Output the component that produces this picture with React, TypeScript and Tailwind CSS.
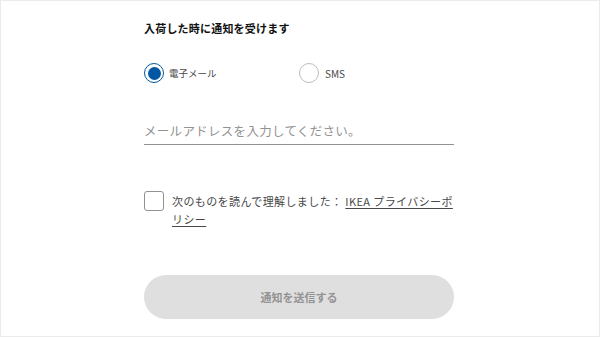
import React from "react";

export default function App() {
  const font = { fontFamily: '"Noto Sans CJK JP", "Noto Sans", sans-serif' };
  return (
    <div
      className="w-[600px] h-[337px] box-border border border-[#ebebeb] bg-white overflow-hidden"
      style={font}
    >
      <div className="ml-[143px] w-[310px] flex flex-col pt-[19px]">
        <div className="text-[11px] leading-[16px] font-bold text-[#111111] tracking-[0.2px]">
          入荷した時に通知を受けます
        </div>

        <div className="mt-[27px] flex items-center h-[20px]">
          <div className="flex items-center w-[155px]">
            <div className="w-[20px] h-[20px] rounded-full border-[1.5px] border-[#0058a3] flex items-center justify-center">
              <div className="w-[13px] h-[13px] rounded-full bg-[#0058a3]" />
            </div>
            <span className="ml-[5px] text-[9.5px] text-[#484848]">電子メール</span>
          </div>
          <div className="flex items-center">
            <div className="w-[20px] h-[20px] rounded-full border border-[#bdbdbd]" />
            <span className="ml-[6px] text-[10px] text-[#484848]">SMS</span>
          </div>
        </div>

        <div className="mt-[39px] border-b border-[#929292] pb-[4px]">
          <div className="text-[12.5px] leading-[18px] text-[#929292] tracking-[0.3px]">
            メールアドレスを入力してください。
          </div>
        </div>

        <div className="mt-[46px] flex items-start">
          <div className="w-[20px] h-[20px] shrink-0 rounded-[3px] border border-[#929292]" />
          <div className="ml-[8px] mt-[1px] w-[282px] text-[11px] leading-[18px] tracking-[0.4px] text-[#484848]">
            次のものを読んで理解しました：{" "}
            <span className="underline underline-offset-2 text-[#484848]">IKEA プライバシーポリシー</span>
          </div>
        </div>

        <div className="mt-[47px] h-[44px] rounded-full bg-[#dfdfdf] flex items-center justify-center">
          <span className="text-[11px] font-bold text-[#929292]">通知を送信する</span>
        </div>
      </div>
    </div>
  );
}
